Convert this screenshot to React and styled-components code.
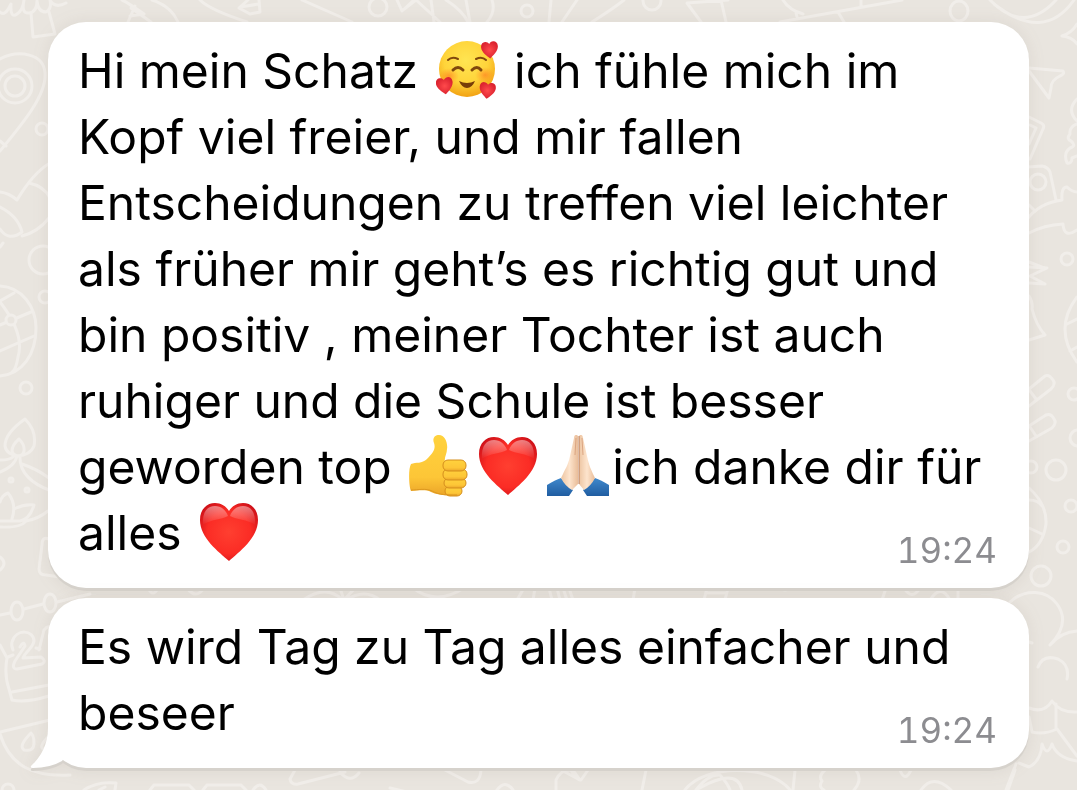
import React from 'react';
import styled, { createGlobalStyle } from 'styled-components';

const GlobalStyle = createGlobalStyle`
  body {
    margin: 0;
    background-color: #e9e5df;
    font-family: Inter, "Liberation Sans", sans-serif;
  }
`;

const Chat = styled.main`
  position: relative;
  box-sizing: border-box;
  min-height: 100vh;
  overflow: hidden;
  padding: 22px 48px 20px;
  display: flex;
  flex-direction: column;
  gap: 10px;
`;

const Wallpaper = styled.svg`
  position: absolute;
  top: 0;
  left: 0;
  width: 1077px;
  height: 790px;
  fill: none;
  stroke: #f1eeea;
  stroke-width: 3;
  stroke-linecap: round;
  stroke-linejoin: round;
`;

const Bubble = styled.article`
  position: relative;
  display: grid;
  padding: 16px 32px 22px 30px;
  border-radius: 38px;
  background-color: #fff;
  filter: drop-shadow(0 3px 0 #d6d2cc) drop-shadow(0 0 8px rgba(120, 100, 80, 0.1));
`;

const Text = styled.p`
  grid-area: 1 / 1;
  margin: 0;
  color: #000;
  font-size: 48px;
  line-height: 66px;
`;

const Time = styled.time`
  grid-area: 1 / 1;
  align-self: end;
  justify-self: end;
  color: #8c8c90;
  font-size: 35px;
  font-variant-numeric: tabular-nums;
  line-height: 32px;
`;

const Tail = styled.svg`
  position: absolute;
  left: -18px;
  bottom: 0;
  width: 44px;
  height: 64px;
  fill: #fff;
`;

const EmojiIcon = styled.svg`
  width: 62px;
  height: 62px;
  margin: 0 3px 0 4px;
  vertical-align: -13px;
`;

const heartPath = 'M30 60C20 51 1 37 1 19C1 8 8 2 16 2C22 2 27 5 30 10C33 5 38 2 44 2C52 2 59 8 59 19C59 37 40 51 30 60Z';

const Emoji = ({ label, children }) => (
    <EmojiIcon viewBox="0 0 62 62" role="img" aria-label={label}>
      {children}
    </EmojiIcon>
);

const Heart = () => (
    <Emoji label="Rotes Herz">
      <defs>
        <radialGradient id="heartFill" cx="0.5" cy="0.5" r="0.62">
          <stop offset="0" stopColor="#ff3f30" />
          <stop offset="0.6" stopColor="#fb2c25" />
          <stop offset="1" stopColor="#c90d17" />
        </radialGradient>
        <linearGradient id="heartShine" x1="0" y1="0" x2="0" y2="1">
          <stop offset="0" stopColor="#fff" stopOpacity="0.45" />
          <stop offset="1" stopColor="#fff" stopOpacity="0" />
        </linearGradient>
      </defs>
      <path d={heartPath} fill="url(#heartFill)" />
      <path d="M4 24C3 10 9 5 16 5C22 5 27 9 29 15C22 19 12 18 4 24Z" fill="url(#heartShine)" />
      <path d="M56 24C57 10 51 5 44 5C38 5 33 9 31 15C38 19 48 18 56 24Z" fill="url(#heartShine)" />
    </Emoji>
);

const SmilingFace = () => (
    <Emoji label="Lächelndes Gesicht mit Herzen">
      <defs>
        <radialGradient id="faceFill" cx="0.48" cy="0.35" r="0.65">
          <stop offset="0" stopColor="#ffe552" />
          <stop offset="0.6" stopColor="#ffd43a" />
          <stop offset="1" stopColor="#f2a213" />
        </radialGradient>
        <radialGradient id="blush">
          <stop offset="0" stopColor="#ff7a21" stopOpacity="0.65" />
          <stop offset="1" stopColor="#ff8a21" stopOpacity="0" />
        </radialGradient>
        <radialGradient id="smallHeart">
          <stop offset="0" stopColor="#ff4a4c" />
          <stop offset="1" stopColor="#dc2430" />
        </radialGradient>
      </defs>
      <circle cx="31" cy="30" r="28" fill="url(#faceFill)" />
      <ellipse cx="13" cy="37" rx="10" ry="8" fill="url(#blush)" />
      <ellipse cx="49" cy="36" rx="10" ry="8" fill="url(#blush)" />
      <g fill="none" stroke="#80480c" strokeWidth="2" strokeLinecap="round">
        <path d="M12 21Q16 17 22 20" />
        <path d="M40 20Q46 17 50 21" />
        <path d="M17 31Q22 26 27 31" strokeWidth="3" />
        <path d="M36 31Q41 26 45 31" strokeWidth="3" />
      </g>
      <path d="M23 42Q31 46 39 42Q36 49 31 49Q26 49 23 42Z" fill="#783d08" />
      <g fill="url(#smallHeart)">
        <path d={heartPath} transform="translate(45 2) rotate(-4 9 9) scale(0.29)" />
        <path d={heartPath} transform="translate(0 38) rotate(-8 9 9) scale(0.29)" />
        <path d={heartPath} transform="translate(43 43) rotate(6 9 9) scale(0.28)" />
      </g>
    </Emoji>
);

const ThumbsUp = () => (
    <Emoji label="Daumen hoch">
      <defs>
        <linearGradient id="thumbFill" x1="0" y1="0" x2="0" y2="1">
          <stop offset="0" stopColor="#ffd23d" />
          <stop offset="0.7" stopColor="#fdc637" />
          <stop offset="1" stopColor="#eba529" />
        </linearGradient>
      </defs>
      <path
        d="M2 29C7 27 13 29 18 24C24 18 27 14 25 8C23 3 26 0 30 0C36 0 39 8 38 14C38 19 35 22 36 27L42 52L50 60C38 61 28 60 22 57C16 54 9 56 2 56C0 52-1 34 2 29Z"
        fill="url(#thumbFill)"
      />
      <g fill="url(#thumbFill)" stroke="#d58e1d" strokeWidth="1">
        <rect x="36" y="51" width="17" height="10" rx="5" />
        <rect x="35" y="43" width="22" height="10" rx="5" />
        <rect x="34" y="34" width="24" height="11" rx="5" />
        <rect x="34" y="25" width="23" height="11" rx="5" />
      </g>
      <path d="M2 55C9 55 17 53 23 56C30 60 38 60 48 60" fill="none" stroke="#dd981f" strokeWidth="1" />
    </Emoji>
);

const FoldedHands = () => (
    <Emoji label="Gefaltete Hände">
      <defs>
        <linearGradient id="handFill">
          <stop offset="0" stopColor="#edc5a2" />
          <stop offset="0.5" stopColor="#fde4cd" />
          <stop offset="1" stopColor="#e9bd99" />
        </linearGradient>
        <linearGradient id="sleeveFill" x1="0" y1="0" x2="0" y2="1">
          <stop offset="0" stopColor="#3f88cc" />
          <stop offset="1" stopColor="#205da1" />
        </linearGradient>
      </defs>
      <path d="M0 50Q8 45 14 43C18 48 21 52 26 55L22 61H0Z" fill="url(#sleeveFill)" />
      <path d="M62 50Q54 45 48 43C44 48 41 52 36 55L40 61H62Z" fill="url(#sleeveFill)" />
      <path d="M31 2C31-1 27-1 27 3L23 21C21 31 18 34 16 39L14 43Q18 51 25 55L31 49Z" fill="url(#handFill)" />
      <path d="M32 2C32-1 36-1 36 3L40 21C42 31 44 34 46 39L48 43Q44 51 37 55L32 49Z" fill="url(#handFill)" />
      <path d="M32 1V49" fill="none" stroke="#ba7953" strokeWidth="1" />
      <path d="M29 3L28 20M35 3L36 20" fill="none" stroke="#dba581" strokeWidth="1" />
    </Emoji>
);

const Doodles = () => (
    <>
      {/* left edge */}
      <path d="M0 12Q5 17 11 4Q10 19 17 14Q23 10 24 0Q21 14 29 13Q37 12 37 1Q38 12 46 12Q52 9 50 0Q55 9 66 3" />
      <path d="M31 13L33 37L55 34L49 12" />
      <path d="M0 59C19 49 44 54 45 73C47 94 24 122 0 151M0 141L6 146" />
      <circle cx="15" cy="86" r="17" />
      <circle cx="15" cy="86" r="10" />
      <circle cx="42" cy="129" r="6" />
      <path d="M0 192Q9 193 17 200Q33 173 50 163M0 207Q18 216 22 232Q9 242 0 229M22 236Q38 232 49 218M29 183Q44 186 50 198M0 247L3 243" />
      <circle cx="43" cy="260" r="14" />
      <circle cx="45" cy="297" r="6" />
      <path d="M0 286C22 287 36 307 36 328C36 355 22 374 0 376M0 301L14 293M0 325L31 312M0 351L34 336M0 302Q25 334 18 357Q16 370 12 372" />
      <circle cx="11" cy="320" r="5" fill="#e9e5df" />
      <circle cx="26" cy="388" r="6" />
      <path d="M25 419Q5 433 5 446C7 459 29 459 34 446Q37 431 25 419ZM19 439Q12 445 12 451C14 458 23 457 24 451Q25 445 19 439M0 460Q10 460 13 457M0 472Q15 466 17 456M20 456C19 473 33 484 49 490M22 464Q37 469 49 478" />
      <path d="M0 502Q2 495 8 493Q17 504 12 519M14 509Q24 504 34 505Q30 519 20 521H0M0 527Q21 528 26 521Q38 519 48 511" />
      <circle cx="11" cy="480" r="2" />
      <circle cx="27" cy="490" r="2" />
      <path d="M0 557Q8 563 0 570M49 539Q42 536 42 545L39 569Q39 575 46 575L60 577" />
      <ellipse cx="17" cy="611" rx="6" ry="9" />
      <ellipse cx="50" cy="603" rx="6" ry="9" />
      <path d="M0 615L10 613M24 609L43 604M57 602L90 594M0 645L7 658Q4 675 9 689L12 700Q26 703 49 696M12 692L49 685" />
      <path d="M13 650Q11 645 12 642C16 628 34 630 34 641C33 648 25 652 23 658L41 657Q47 661 42 664L17 669Q11 669 15 661L25 646Q24 640 20 647M39 650L44 630Q49 624 53 629M8 657L13 655M36 648L40 649" />
      <path d="M0 732L50 720M0 734C10 766 33 777 70 775M31 733Q18 746 24 750Q34 752 34 743Q34 736 31 733M48 737Q39 746 43 749" />
      <circle cx="8" cy="790" r="6" />
      {/* right edge */}
      <path d="M990 0Q1024 35 1056 0M994 4Q1044 43 1074 0M1077 24Q1072 33 1062 36Q1072 37 1077 44" />
      <path d="M1029 68L1063 71Q1065 74 1060 76Q1051 80 1051 88L1049 98L1029 71M1029 117L1041 123Q1045 125 1043 129L1030 159M1030 125L1036 128L1029 144M1077 99Q1066 110 1077 121" />
      <path d="M1077 124Q1069 127 1070 134Q1066 139 1071 141Q1077 146 1070 148Q1063 153 1067 163Q1072 164 1072 158L1077 156" />
      <path d="M1028 167L1042 166Q1048 167 1050 172L1056 200M1029 205L1035 211" />
      <circle cx="1038" cy="182" r="8" />
      <path d="M1028 218Q1040 203 1062 200Q1061 187 1067 187Q1072 192 1077 192M1029 233Q1044 225 1063 224Q1064 239 1077 230M1029 262L1044 268" />
      <circle cx="1067" cy="259" r="6" />
      <path d="M1029 267L1047 268L1030 276L1045 284L1029 283M1029 296Q1033 302 1032 309Q1036 325 1045 335L1029 340M1077 297Q1053 329 1077 362M1067 324L1077 319M1070 351L1077 347" />
      <path d="M1029 389L1045 376Q1049 374 1053 380Q1056 384 1051 389L1029 406M1030 391L1036 399M1029 426L1046 415Q1051 413 1054 419Q1057 423 1052 428L1029 441M1030 427L1036 436" />
      <circle cx="1074" cy="394" r="6" />
      <circle cx="1078" cy="438" r="8" />
      <circle cx="1031" cy="467" r="6" />
      <circle cx="1056" cy="470" r="10" />
      <circle cx="1071" cy="506" r="6" />
      <path d="M1029 488Q1047 504 1046 524Q1043 545 1029 552M1029 500Q1038 500 1042 506M1029 528L1042 534" />
      <circle cx="1063" cy="547" r="6" />
      <circle cx="1041" cy="576" r="10" />
      <path d="M1010 602C1025 588 1047 590 1057 604Q1071 623 1050 645Q1061 632 1077 631M1029 642L1032 643M1038 667Q1043 654 1058 659Q1070 665 1067 679M1029 708Q1044 714 1052 701Q1060 713 1077 712M1056 704V729M1029 717L1032 732Q1044 735 1057 729L1077 756M1077 761Q1057 758 1052 744Q1047 758 1042 744Q1041 761 1029 767L1019 763M1016 764L1006 790" />
      {/* above the first bubble */}
      <path d="M122 0Q127 2 144 14L130 16M131 8L151 22M135 6L128 22M152 0Q171 6 178 22M200 0Q210 10 247 22M248 0L239 8L250 14L260 12L259 0M241 7L258 4M302 0L352 22" />
      <ellipse cx="378" cy="7" rx="9" ry="9" />
      <path d="M397 0L402 11L414 0M403 10L416 0L440 22M431 0L434 22M446 0Q462 10 468 22M466 0L470 22M492 0Q496 12 487 22" />
      <circle cx="527" cy="11" r="6" />
      <path d="M551 0L549 22M577 0L562 22M624 0Q614 8 592 22M728 0L687 3L701 22M721 0L726 22M783 0Q789 10 803 14M780 22L902 0M796 13L797 17M838 12L844 22M861 0V6" />
      <circle cx="652" cy="1" r="9" />
      <ellipse cx="959" cy="11" rx="9" ry="10" />
      {/* between and below the bubbles */}
      <path d="M148 588Q153 598 158 588M187 588Q196 600 204 588M303 600Q326 584 343 600M340 588L344 600L355 588M346 600Q365 588 380 600M413 588Q436 606 464 588M517 600L524 588M535 588L533 600M549 588L552 600M557 588L560 600M563 588L567 600M569 588L573 600M635 588L633 600M704 600L707 588M706 593H725M728 588L725 600M780 588Q785 592 790 588M886 588L882 600M904 588Q912 601 920 588M930 600Q941 583 950 600M958 588V600" />
      <path d="M295 770L290 779Q291 785 298 784L345 772M340 772Q350 784 359 773M445 770L468 782Q480 785 481 770M556 790V780Q561 769 571 770Q576 780 581 780L588 770M563 771L580 780L573 770M646 770L642 790M685 790C704 764 770 764 790 790M696 790Q708 774 720 775Q728 784 730 790M742 790Q737 766 696 790M795 770L793 790M825 770Q818 776 822 781Q818 787 824 790M856 770Q863 780 854 790M900 770Q905 783 911 770M921 790Q933 773 951 790M1015 770L1008 790" />
      <path d="M84 790Q97 781 116 783L115 790M99 790L105 787M150 790L154 785H189L194 790M203 790L207 785H241L246 790M253 790Q260 780 266 790M390 788L407 792M497 790Q505 779 513 790" />
    </>
);

const messages = [
    {
        id: 1,
        time: '19:24',
        body: (
            <>
              Hi mein Schatz <SmilingFace /> ich fühle mich im Kopf viel freier, und mir fallen
              {' '}Entscheidungen zu treffen viel leichter als früher mir geht’s es richtig gut und
              {' '}bin positiv , meiner Tochter ist auch ruhiger und die Schule ist besser
              {' '}geworden top <ThumbsUp /><Heart /><FoldedHands />ich danke dir für alles <Heart />
            </>
        ),
    },
    {
        id: 2,
        time: '19:24',
        body: 'Es wird Tag zu Tag alles einfacher und beseer',
        last: true,
    },
];

const App = () => {
    return (
        <>
          <GlobalStyle />
          <Chat>
            <Wallpaper viewBox="0 0 1077 790" aria-hidden="true">
              <Doodles />
            </Wallpaper>
            {messages.map((message) => (
              <Bubble key={message.id}>
                {message.last && (
                  <Tail viewBox="0 0 44 64" aria-hidden="true">
                    <path d="M18 0V24C18 40 11 53 1 62Q0 64 3 64Q20 64 32 57L44 40V0Z" />
                  </Tail>
                )}
                <Text>{message.body}</Text>
                <Time>{message.time}</Time>
              </Bubble>
            ))}
          </Chat>
        </>
    );
};

export default App;
